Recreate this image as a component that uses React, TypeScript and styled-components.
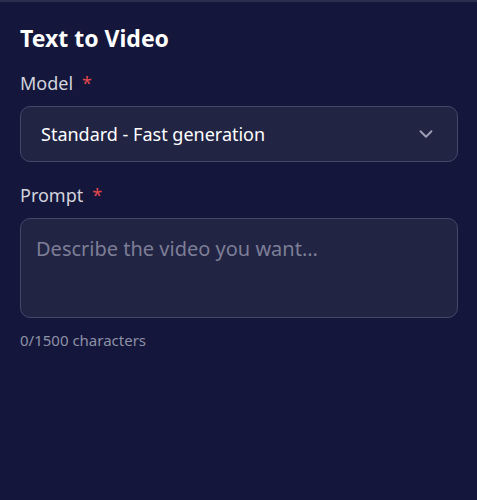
import styled, { createGlobalStyle } from "styled-components";
import { ChevronDown } from "lucide-react";

const GlobalStyle = createGlobalStyle`
  html, body {
    margin: 0;
    padding: 0;
    background: #14173b;
  }
  body {
    font-family: "Noto Sans", "Open Sans", sans-serif;
  }
`;

const Panel = styled.div`
  box-sizing: border-box;
  width: 477px;
  min-height: 500px;
  padding: 20px 19px 20px 20px;
  background: #14173b;
  border-top: 2px solid #2b2e4e;
  display: flex;
  flex-direction: column;
`;

const Title = styled.h2`
  margin: 0 0 17px;
  font-size: 23px;
  font-weight: 700;
  line-height: 32px;
  color: #ffffff;
`;

const Field = styled.div`
  display: flex;
  flex-direction: column;
  margin-bottom: ${(p: { $gap?: number }) => p.$gap ?? 21}px;
`;

const Label = styled.label`
  font-size: 18px;
  line-height: 24px;
  color: #d3d4dd;
  margin-bottom: 11px;
`;

const Required = styled.span`
  color: #e5484d;
  margin-left: 9px;
`;

const SelectBox = styled.div`
  height: 56px;
  box-sizing: border-box;
  display: flex;
  align-items: center;
  justify-content: space-between;
  padding: 0 20px;
  background: #222444;
  border: 1px solid #44476a;
  border-radius: 10px;
  color: #ffffff;
  font-size: 18px;
`;

const Chevron = styled(ChevronDown)`
  color: #9ea0b6;
  flex-shrink: 0;
`;

const TextArea = styled.textarea`
  box-sizing: border-box;
  height: 100px;
  padding: 16px 15px;
  background: #222444;
  border: 1px solid #44476a;
  border-radius: 10px;
  color: #ffffff;
  font-family: inherit;
  font-size: 20px;
  resize: none;
  outline: none;
  &::placeholder {
    color: #7c7e96;
  }
`;

const Hint = styled.div`
  margin-top: 12px;
  font-size: 15px;
  line-height: 20px;
  color: #8e90a6;
`;

export default function App() {
  return (
    <>
      <GlobalStyle />
      <Panel>
        <Title>Text to Video</Title>
        <Field>
          <Label>
            Model<Required>*</Required>
          </Label>
          <SelectBox>
            <span>Standard - Fast generation</span>
            <Chevron size={22} strokeWidth={2} />
          </SelectBox>
        </Field>
        <Field $gap={0}>
          <Label>
            Prompt<Required>*</Required>
          </Label>
          <TextArea placeholder="Describe the video you want..." />
          <Hint>0/1500 characters</Hint>
        </Field>
      </Panel>
    </>
  );
}
